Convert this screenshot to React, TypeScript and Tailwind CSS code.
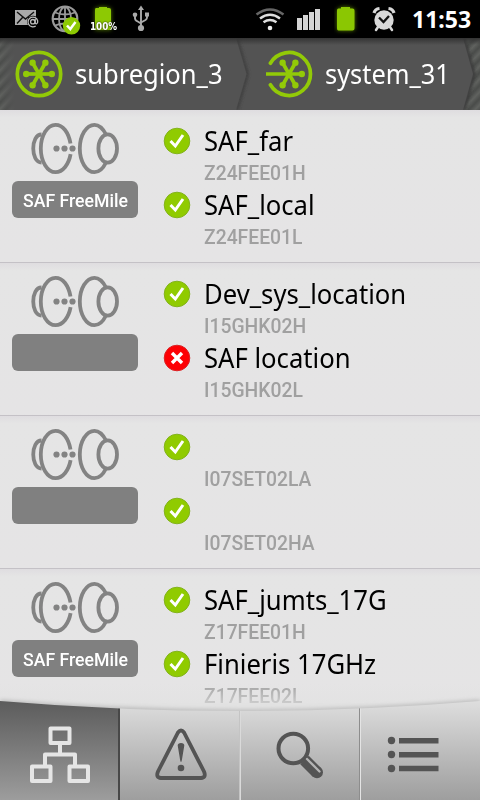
import React from 'react';

type Status = 'ok' | 'error';

interface Endpoint {
  name: string;
  code: string;
  status: Status;
}

interface Link {
  label: string;
  endpoints: Endpoint[];
}

const links: Link[] = [
  {
    label: 'SAF FreeMile',
    endpoints: [
      { name: 'SAF_far', code: 'Z24FEE01H', status: 'ok' },
      { name: 'SAF_local', code: 'Z24FEE01L', status: 'ok' },
    ],
  },
  {
    label: '',
    endpoints: [
      { name: 'Dev_sys_location', code: 'I15GHK02H', status: 'ok' },
      { name: 'SAF location', code: 'I15GHK02L', status: 'error' },
    ],
  },
  {
    label: '',
    endpoints: [
      { name: '', code: 'I07SET02LA', status: 'ok' },
      { name: '', code: 'I07SET02HA', status: 'ok' },
    ],
  },
  {
    label: 'SAF FreeMile',
    endpoints: [
      { name: 'SAF_jumts_17G', code: 'Z17FEE01H', status: 'ok' },
      { name: 'Finieris 17GHz', code: 'Z17FEE02L', status: 'ok' },
    ],
  },
];

const StatusBar: React.FC = () => (
  <div className="flex h-[38px] shrink-0 items-center bg-black">
    {/* Mail */}
    <svg className="ml-[14px] h-[38px] w-[26px]" viewBox="14 0 26 38" fill="none">
      <path d="M15 10h21v15H15z" fill="#aaa" />
      <path d="M17 12l8.500 7 8.500-7M17 23.500l5.500-6M28.500 17.500l1.500 1.500" stroke="#111" strokeWidth="1.400" />
      <circle cx="33" cy="21.800" r="6" fill="#000" />
      <circle cx="32.800" cy="21.700" r="2.200" stroke="#bbb" strokeWidth="1.300" />
      <path d="M35.200 19v3.500q0 1.500 1.300 1.300 1.500-.5 1.200-3a4.900 4.900 0 1 0-2 5.200" stroke="#bbb" strokeWidth="1.300" />
    </svg>
    {/* Globe with check badge */}
    <svg className="ml-[11px] h-[38px] w-[32px]" viewBox="51 0 32 38" fill="none">
      <g stroke="#999" strokeWidth="1.800">
        <circle cx="65" cy="18.800" r="12.300" strokeWidth="2.200" />
        <ellipse cx="65" cy="19" rx="6" ry="12" />
        <path d="M65 7v24M53 19h24M55 12.500q10 4 20 0M55 25.500q10-4 20 0" />
      </g>
      <circle cx="71.500" cy="25.800" r="8.700" fill="#8dc903" />
      <path d="M67 25.500l3.300 3.500L75.500 22" stroke="#fff" strokeWidth="2.500" />
    </svg>
    {/* Charge level */}
    <div className="relative ml-[5px] h-[38px] w-[30px]">
      <svg className="h-[38px] w-[30px]" viewBox="88 0 30 38">
        <path d="M96 8h3V7h8v1h2q2 0 2 2v20H95V10q0-2 1-2z" fill="#8dc903" className="drop-shadow-[0_0_2px_#598000]" />
      </svg>
      <span className="absolute top-[21px] left-[2px] origin-left scale-x-[0.88] font-['DejaVu_Sans',sans-serif] text-[10px] leading-[12px] font-bold text-white [text-shadow:0_0_2px_#000]">
        100%
      </span>
    </div>
    {/* USB */}
    <svg className="ml-[13px] h-[38px] w-[20px]" viewBox="131 0 20 38" fill="none" stroke="#aaa" strokeWidth="1.900">
      <path d="M141 8v20M135 16v2.500q0 1.500 1.500 2.300L141 23.500M147 15v2.500q0 1.500-1.500 2.500L141 22.500" />
      <path d="M141 5.500l3 4.500h-6zM145 12.500h4v4h-4z" fill="#aaa" stroke="none" />
      <circle cx="135" cy="14.700" r="2.300" fill="#aaa" stroke="none" />
      <circle cx="141" cy="28" r="3.100" fill="#aaa" stroke="none" />
    </svg>
    {/* Wifi */}
    <svg className="ml-auto h-[38px] w-[30px]" viewBox="255 0 30 38" fill="none" strokeWidth="2.500">
      <path d="M256.500 14.500q13.500-10 27 0" stroke="#666" />
      <path d="M260 18.500q10-7.500 20 0M263.500 22.300q6.500-4.500 13 0" stroke="#ddd" />
      <circle cx="270" cy="28" r="2.300" fill="#eee" />
    </svg>
    {/* Signal */}
    <svg className="ml-[11px] h-[38px] w-[26px]" viewBox="296 0 26 38" fill="#d4d4d4">
      <path d="M297 18h5v12h-5zM303 15h5v15h-5zM309 12h5v18h-5zM315 9h5v21h-5z" />
    </svg>
    {/* Battery */}
    <svg className="ml-[12px] h-[38px] w-[26px]" viewBox="334 0 26 38">
      <path d="M338.500 8.500h2.500V7h9v1.500h2.500q2 0 2 2v18q0 2-2 2h-14q-1.500 0-1.500-2v-18q0-2 1.500-2z" fill="#8bc702" className="drop-shadow-[0_0_2px_#598000]" />
    </svg>
    {/* Alarm */}
    <svg className="ml-[11px] h-[38px] w-[26px]" viewBox="371 0 26 38" fill="none">
      <circle cx="384" cy="20" r="9.700" fill="#d8d8d8" />
      <path d="M374 13q1-4 5.500-4.500M388.500 8.500q4.500.5 5.500 4.500" stroke="#d8d8d8" strokeWidth="3.200" />
      <path d="M378 27l-2 3M390 27l2 3" stroke="#d8d8d8" strokeWidth="2.500" strokeLinecap="round" />
      <path d="M379 17.500l4.500 4.500 5.500-6" stroke="#111" strokeWidth="2.300" />
    </svg>
    <span className="mr-[9px] ml-[15px] w-[59px] pb-px text-[23px] leading-[30px] font-bold whitespace-nowrap text-white">11:53</span>
  </div>
);

const RegionIcon: React.FC<{ open?: boolean }> = ({ open = false }) => (
  <svg className="h-[48px] w-[48px] shrink-0" viewBox="-24 -24 48 48" fill="none" stroke="#92ca07" strokeWidth="3.700">
    {open ? (
      <path d="M-18.600-10.800A21.500 21.500 0 1 1-18.600 10.800" strokeLinecap="round" />
    ) : (
      <circle r="21.700" />
    )}
    <path d={open ? 'M-23 0H13' : 'M-13 0H13'} />
    <path d="M-6.300-11L6.300 11M6.300-11L-6.300 11" />
    <g fill="#92ca07" stroke="none">
      {!open && <circle cx="-12.800" r="3.200" />}
      <circle cx="12.800" r="3.200" />
      <circle cx="-6.400" cy="-11.200" r="3.200" />
      <circle cx="6.400" cy="-11.200" r="3.200" />
      <circle cx="-6.400" cy="11.200" r="3.200" />
      <circle cx="6.400" cy="11.200" r="3.200" />
    </g>
  </svg>
);

const HeaderTexture: React.FC = () => (
  <svg className="absolute inset-0 h-[72px] w-[480px]" viewBox="0 0 480 72" fill="none">
    <defs>
      <linearGradient id="stripeFill" x2="0" y2="1">
        <stop offset="0" stopColor="#494b49" />
        <stop offset="0.500" stopColor="#60625f" />
        <stop offset="1" stopColor="#494b49" />
      </linearGradient>
      <pattern id="stripes" width="9" height="9" patternUnits="userSpaceOnUse" patternTransform="rotate(-46)">
        <rect width="9" height="9" fill="url(#stripeFill)" />
      </pattern>
      <linearGradient id="fadeLeft">
        <stop offset="0" stopColor="#535353" stopOpacity="0" />
        <stop offset="1" stopColor="#535353" />
      </linearGradient>
      <linearGradient id="topShade" x2="0" y2="1">
        <stop offset="0" stopColor="#333" />
        <stop offset="1" stopColor="#333" stopOpacity="0" />
      </linearGradient>
      <filter id="soft" x="-1" width="3">
        <feGaussianBlur stdDeviation="1.500" />
      </filter>
    </defs>
    <rect width="15" height="72" fill="url(#stripes)" />
    <rect width="15" height="72" fill="url(#fadeLeft)" />
    <path d="M464 0h16v72h-16l10-36z" fill="url(#stripes)" />
    <path d="M464 0l10 36-10 36" stroke="#383838" strokeWidth="3" filter="url(#soft)" />
    <path d="M463 0l10 36-10 36h-8V0z" fill="#535353" />
    <path d="M237 0l10.500 36L237 72" stroke="#3a3a3a" strokeWidth="2.500" filter="url(#soft)" />
    <path d="M236 0l10.500 36L236 72h-8V0z" fill="#535353" />
    <rect width="480" height="7" fill="url(#topShade)" />
  </svg>
);

const Breadcrumbs: React.FC = () => (
  <header className="relative flex h-[72px] shrink-0 bg-[#535353] text-[27px] leading-[36px] text-white">
    <HeaderTexture />
    <div className="relative flex w-[250px] items-center pl-[15px]">
      <RegionIcon />
      <span className="ml-[12px] origin-left scale-x-[0.945] whitespace-nowrap">subregion_3</span>
    </div>
    <div className="relative flex items-center pl-[15px]">
      <RegionIcon open />
      <span className="ml-[12px] origin-left scale-x-[0.94] whitespace-nowrap">system_31</span>
    </div>
  </header>
);

const LinkIcon: React.FC = () => (
  <svg className="h-[54px] w-[90px]" viewBox="30 121 90 54" fill="none" stroke="#838383" strokeWidth="3.800">
    <path d="M41.500 134.500c-11 0-11 28 0 28" />
    <path d="M70.500 143.500c-2-11-7.500-18.700-15-18.700-8.200 0-14.700 10.700-14.700 23.700S47.300 172.200 55.500 172.200c7.500 0 13.200-7.700 15.100-18" />
    <path d="M106 134.500c-3-6-7-9.700-11.500-9.700-8.200 0-14.700 10.700-14.700 23.700S86.300 172.200 94.500 172.200c4.500 0 8.500-3.500 11.500-9.700" />
    <ellipse cx="107.700" cy="148.500" rx="9.300" ry="14.200" />
    <g fill="#838383" stroke="none">
      <circle cx="56.500" cy="148.500" r="3.100" />
      <circle cx="64.500" cy="148.500" r="3.100" />
      <circle cx="72.500" cy="148.500" r="3.100" />
    </g>
  </svg>
);

const StatusIcon: React.FC<{ status: Status }> = ({ status }) => (
  <svg className="mt-[2px] h-[28px] w-[28px] shrink-0" viewBox="-14 -14 28 28" fill="none" stroke="#fff">
    <circle r="12.800" fill={status === 'ok' ? '#90cb00' : '#fd0004'} stroke={status === 'ok' ? '#83b31c' : '#dc2225'} strokeWidth="1" />
    {status === 'ok' ? (
      <path d="M-6.500 0l4.800 5L6-6" strokeWidth="3" />
    ) : (
      <path d="M-5-5L5 5M5-5L-5 5" strokeWidth="3.400" />
    )}
  </svg>
);

const LinkRow: React.FC<{ link: Link }> = ({ link }) => (
  <li className="flex h-[153px] shrink-0 border-b border-[#c4c1c6] bg-linear-to-b from-[#dfdde0] via-[#e5e5e5] via-5% to-[#e5e4e5]">
    <div className="ml-[12px] flex w-[126px] flex-col items-center pt-[11px]">
      <LinkIcon />
      <div className="mt-[6px] flex h-[37px] w-full items-center justify-center rounded-[6px] bg-[#808080] pt-px font-[Roboto,sans-serif] text-[18px] font-medium text-white">
        <span className="scale-x-[0.98] whitespace-nowrap">{link.label}</span>
      </div>
    </div>
    <div className="ml-[25px] pt-[15px]">
      {link.endpoints.map((endpoint) => (
        <div key={endpoint.code} className="flex h-[64px]">
          <StatusIcon status={endpoint.status} />
          <div className="ml-[13px]">
            <div className="h-[36px] origin-left scale-x-[0.95] text-[27px] leading-[32px] whitespace-nowrap text-black">{endpoint.name}</div>
            <div className="origin-left scale-x-[0.92] font-[Roboto,sans-serif] text-[21px] leading-[24px] font-medium whitespace-nowrap text-[#a0a0a0]">{endpoint.code}</div>
          </div>
        </div>
      ))}
    </div>
  </li>
);

const NavBar: React.FC = () => (
  <nav className="relative -mt-[11px] h-[99px] shrink-0">
    <div className="flex h-full [clip-path:path('M0_0Q240_20_480_0V99H0Z')]">
      <button className="w-[120px] border-r-2 border-[#484848] bg-linear-to-b from-[#5c5c5c] to-[#9d9d9d]">
        <svg className="h-full w-full" viewBox="0 701 118 99" fill="none" stroke="#e5e5e5" strokeWidth="4" strokeLinejoin="round">
          <path d="M50.500 728.500h19v14.500h-19zM32 766.500h18.500V781H32zM69.500 766.500H88V781H69.500zM60 744v10M45 766v-11.500h30V766" />
        </svg>
      </button>
      <button className="w-[120px] border-r border-[#c4c4c4] bg-linear-to-b from-[#dedede] to-[#9e9e9e]">
        <svg className="h-full w-full" viewBox="120 701 119 99" fill="none">
          <path d="M178 732.500q3-4 6 0l20 39q2.500 6-3 6.500h-40q-5.500-.5-3-6.500z" stroke="#545454" strokeWidth="3.800" />
          <path d="M177.700 745.500q0-2.500 3.300-2.500t3.300 2.500l-2 12q-1.300 9-2.600 0z" fill="#545454" />
          <circle cx="181" cy="768" r="3.300" fill="#545454" />
        </svg>
      </button>
      <button className="w-[120px] border-r border-[#8d8d8d] border-l border-l-[#dadada] bg-linear-to-b from-[#dedede] to-[#9e9e9e]">
        <svg className="h-full w-full" viewBox="241 701 118 99" fill="none" stroke="#545454">
          <circle cx="293.300" cy="748.500" r="14.800" strokeWidth="4" />
          <path d="M304.500 760l12.500 12.500" strokeWidth="12" />
          <circle cx="317" cy="772.300" r="6" fill="#545454" stroke="none" />
          <path d="M307 759l12.500 12.500" stroke="#b4b4b4" strokeWidth="2.300" strokeLinecap="round" />
        </svg>
      </button>
      <button className="w-[120px] border-l border-[#e4e4e4] bg-linear-to-b from-[#dedede] to-[#9e9e9e]">
        <svg className="h-full w-full" viewBox="361 701 119 99" fill="#545454">
          <circle cx="391.500" cy="740.500" r="3.700" />
          <circle cx="391.500" cy="754.500" r="3.700" />
          <circle cx="391.500" cy="768.500" r="3.700" />
          <path d="M399 738h39.500v5.500H399zM399 752h39.500v5.500H399zM399 765.700h39.500v5.500H399z" />
        </svg>
      </button>
    </div>
  </nav>
);

const ListFade: React.FC = () => (
  <>
    <div className="absolute inset-x-0 bottom-[9px] h-[20px] bg-linear-to-b from-[#e5e5e5]/0 to-[#e2e2e2]/65" />
    <svg className="absolute bottom-0 left-0 h-[20px] w-[480px]" viewBox="0 692 480 20" fill="none">
      <defs>
        <filter id="curveShadow" y="-1" height="3">
          <feGaussianBlur stdDeviation="2" />
        </filter>
      </defs>
      <path d="M0 703H480V712H0z" fill="#e2e2e2" />
      <path d="M0 702Q240 722 480 702" stroke="#b4b4b4" strokeWidth="4" filter="url(#curveShadow)" />
    </svg>
  </>
);

export default function App() {
  return (
    <div className="flex h-[800px] w-[480px] flex-col overflow-hidden bg-[#e5e5e5] font-['Noto_Sans','Open_Sans',sans-serif]">
      <StatusBar />
      <Breadcrumbs />
      <main className="relative h-[602px] shrink-0 overflow-hidden">
        <ul className="flex flex-col">
          {links.map((link, index) => (
            <LinkRow key={index} link={link} />
          ))}
        </ul>
        <ListFade />
      </main>
      <NavBar />
    </div>
  );
}
